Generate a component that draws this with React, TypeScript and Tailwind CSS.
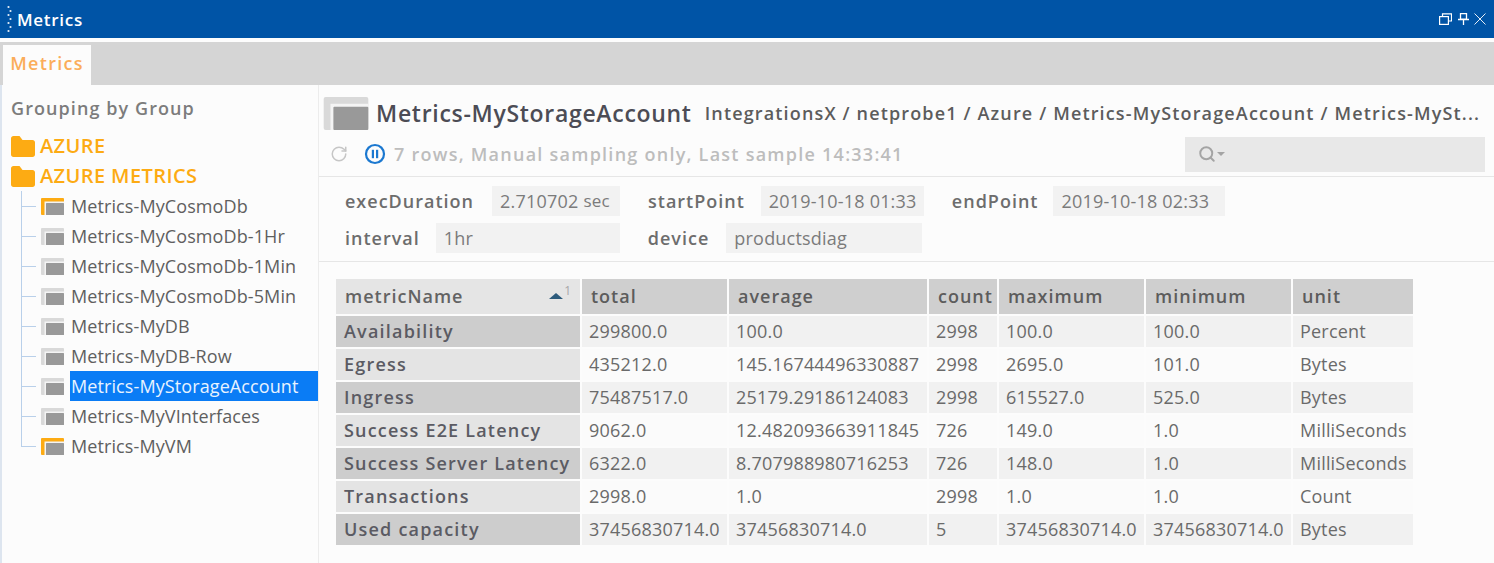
import { RotateCw, Search } from 'lucide-react';

const treeItems = [
  { name: 'Metrics-MyCosmoDb', active: true },
  { name: 'Metrics-MyCosmoDb-1Hr' },
  { name: 'Metrics-MyCosmoDb-1Min' },
  { name: 'Metrics-MyCosmoDb-5Min' },
  { name: 'Metrics-MyDB' },
  { name: 'Metrics-MyDB-Row' },
  { name: 'Metrics-MyStorageAccount', selected: true },
  { name: 'Metrics-MyVInterfaces' },
  { name: 'Metrics-MyVM', active: true },
];

const columns = ['total', 'average', 'count', 'maximum', 'minimum', 'unit'];
const colWidths = ['w-[246px]', 'w-[147px]', 'w-[200px]', 'w-[70px]', 'w-[147px]', 'w-[147px]', 'w-[122px]'];

const rows = [
  ['Availability', '299800.0', '100.0', '2998', '100.0', '100.0', 'Percent'],
  ['Egress', '435212.0', '145.16744496330887', '2998', '2695.0', '101.0', 'Bytes'],
  ['Ingress', '75487517.0', '25179.29186124083', '2998', '615527.0', '525.0', 'Bytes'],
  ['Success E2E Latency', '9062.0', '12.482093663911845', '726', '149.0', '1.0', 'MilliSeconds'],
  ['Success Server Latency', '6322.0', '8.707988980716253', '726', '148.0', '1.0', 'MilliSeconds'],
  ['Transactions', '2998.0', '1.0', '2998', '1.0', '1.0', 'Count'],
  ['Used capacity', '37456830714.0', '37456830714.0', '5', '37456830714.0', '37456830714.0', 'Bytes'],
];

const Folder = () => (
  <svg width="24" height="21" viewBox="0 0 24 21" className="shrink-0">
    <path d="M0 2.5C0 1 1 0 2.5 0H8.5l3 4h10C23 4 24 5 24 6.5v12c0 1.5-1 2.5-2.5 2.5h-19C1 21 0 20 0 18.5z" fill="#fdab13" />
  </svg>
);

const ViewIcon = ({ active, big }: { active?: boolean; big?: boolean }) => (
  <svg width={big ? 48 : 23} height={big ? 33 : 17} viewBox="0 0 23 17" className="shrink-0">
    <rect x="0" y="0" width="23" height="17" rx="1" fill={active ? '#fdab13' : '#d9d9d9'} />
    <rect x="3.5" y="3.5" width="19.5" height="13.5" fill="#f4f4f4" />
    <rect x="5" y="5" width="18" height="12" rx="0.5" fill="#999999" />
  </svg>
);

const Field = ({ label, value, width, labelGap }: { label: string; value: React.ReactNode; width: string; labelGap: string }) => (
  <div className="flex items-center">
    <span className={`font-semibold text-[#6d6d6d] tracking-[1px] ${labelGap}`}>{label}</span>
    <span className={`h-[30px] flex items-center px-2 bg-[#f2f2f2] text-[#7b7b7b] tracking-[0.2px] whitespace-nowrap ${width}`}>{value}</span>
  </div>
);

export default function App() {
  return (
    <div className="w-[1494px] h-[563px] overflow-hidden bg-[#fcfcfc] text-[16px] font-['Open_Sans',sans-serif]">
      <header className="h-[38px] bg-[#0054a6] flex items-center justify-between pl-[7px] pr-[8px] text-white">
        <div className="flex items-center gap-[5px]">
          <svg width="5" height="28" viewBox="0 0 5 28">
            {[1, 5, 9, 13, 17, 21, 25].map((y, i) => (
              <circle key={y} cx={i % 2 ? 3.5 : 1.5} cy={y + 1} r="1.1" fill="#e6eef7" />
            ))}
          </svg>
          <span className="text-[17px] font-semibold tracking-[0.7px] pt-[1px]">Metrics</span>
        </div>
        <div className="flex items-center mb-[1px]">
          <svg width="13" height="12" viewBox="0 0 13 12" fill="none" stroke="white" strokeWidth="1.2">
            <rect x="0.6" y="3.6" width="8.8" height="7.8" />
            <path d="M3.5 3.5V0.8h9v7.2H9.5" />
          </svg>
          <svg width="11" height="12" viewBox="0 0 11 12" fill="none" stroke="white" strokeWidth="1.3" className="ml-[6px]">
            <path d="M2.5 0.7h6v5.5h-6z M0 6.5h11 M5.5 6.5V12" />
          </svg>
          <svg width="12" height="12" viewBox="0 0 12 12" fill="none" stroke="white" strokeWidth="0.9" className="ml-[5px]">
            <path d="M0.5 0.5l11 11 M11.5 0.5l-11 11" />
          </svg>
        </div>
      </header>
      <div className="h-[4px] bg-[#fdfdfd]" />

      <div className="h-[43px] bg-[#d5d5d5] flex items-end pl-[3px]">
        <div className="w-[88px] h-[40px] pb-[3px] bg-[#fcfcfc] flex items-center justify-center text-[#fbad5a] text-[18px] font-semibold tracking-[1.3px]">
          Metrics
        </div>
      </div>

      <div className="flex h-[478px]">
        <aside className="w-[319px] shrink-0 border-r border-[#ececec] border-l-[2px] border-l-[#dde5ef] pl-[9px]">
          <div className="h-[46px] flex items-center text-[#7c7c7c] text-[18px] font-semibold tracking-[1.08px]">Grouping by Group</div>
          <div className="h-[30px] flex items-center gap-[5px] text-[#fdab13] text-[20px] font-semibold tracking-[0.4px]">
            <Folder />
            AZURE
          </div>
          <div className="h-[30px] flex items-center gap-[5px] text-[#fdab13] text-[20px] font-semibold tracking-[0.4px]">
            <Folder />
            AZURE METRICS
          </div>
          <ul className="text-[18px] tracking-[0.1px] text-[#5f5f5f]">
            {treeItems.map((item, i) => (
              <li key={item.name} className="relative h-[30px] flex items-center pl-[30px]">
                <span className={`absolute left-[10px] top-0 w-[1px] bg-[#b9d0ea] ${i === treeItems.length - 1 ? 'h-[15px]' : 'h-[30px]'}`} />
                <span className="absolute left-[10px] top-[15px] w-[15px] h-[1px] bg-[#b9d0ea]" />
                <ViewIcon active={item.active} />
                <span className={`ml-[6px] pl-[1px] h-[30px] flex-1 flex items-center ${item.selected ? 'bg-[#0a7cf5] text-[#e8f3ff]' : ''}`}>
                  {item.name}
                </span>
              </li>
            ))}
          </ul>
        </aside>

        <main className="flex-1 min-w-0">
          <div className="h-[92px] border-b border-[#e6e6e6] pl-[3px] pr-[8px]">
            <div className="h-[49px] flex items-center pt-[7px]">
              <ViewIcon big />
              <span className="ml-[6px] text-[23px] font-semibold text-[#4c4c55] tracking-[0.7px] whitespace-nowrap">Metrics-MyStorageAccount</span>
              <span className="ml-[13px] text-[18px] font-semibold text-[#5c5c5c] tracking-[1.15px] whitespace-nowrap">
                IntegrationsX / netprobe1 / Azure / Metrics-MyStorageAccount / Metrics-MySt...
              </span>
            </div>
            <div className="flex items-center justify-between h-[40px] pl-[8px]">
              <div className="flex items-center">
                <RotateCw size={18} strokeWidth={2} color="#c6c6c6" />
                <svg width="22" height="22" viewBox="0 0 22 22" className="ml-[16px]">
                  <circle cx="11" cy="11" r="9" fill="none" stroke="#1b78d0" strokeWidth="2.2" />
                  <rect x="7.8" y="6.8" width="2.2" height="8.4" fill="#1b78d0" />
                  <rect x="12" y="6.8" width="2.2" height="8.4" fill="#1b78d0" />
                </svg>
                <span className="ml-[8px] text-[18px] font-semibold text-[#bdbdbd] tracking-[1.25px] whitespace-nowrap">
                  7 rows, Manual sampling only, Last sample 14:33:41
                </span>
              </div>
              <div className="w-[300px] h-[35px] bg-[#e8e8e8] flex items-center pl-[13px] text-[#a4a4a4] mr-[1px]">
                <Search size={18} strokeWidth={2.6} />
                <span className="ml-[1px] w-0 h-0 border-x-[4px] border-x-transparent border-t-[4px] border-t-[#a4a4a4]" />
              </div>
            </div>
          </div>

          <div className="h-[85px] border-b border-[#e6e6e6] pl-[26px] pt-[9px] text-[18px]">
            <div className="flex items-center gap-[28px] h-[30px] mb-[7px]">
              <Field label="execDuration" labelGap="mr-[18px]" width="w-[128px]" value={<>2.710702<span className="ml-[5px] text-[17px]">sec</span></>} />
              <Field label="startPoint" labelGap="mr-[16px]" width="w-[163px]" value="2019-10-18 01:33" />
              <Field label="endPoint" labelGap="mr-[15px]" width="w-[172px]" value="2019-10-18 02:33" />
            </div>
            <div className="flex items-center gap-[28px] h-[30px]">
              <Field label="interval" labelGap="mr-[16px]" width="w-[184px]" value="1hr" />
              <Field label="device" labelGap="mr-[17px]" width="w-[196px]" value="productsdiag" />
            </div>
          </div>

          <div className="pl-[17px] pt-[17px]">
            <table className="table-fixed border-separate border-spacing-0 w-[1079px] text-[18px] tracking-[0.2px] text-[#6a6a6a]">
              <colgroup>
                {colWidths.map((w, i) => <col key={i} className={w} />)}
              </colgroup>
              <thead>
                <tr className="h-[37px]">
                  <th className="relative border-r-[2px] border-b-[2px] border-[#fcfcfc] bg-[#e5e5e5] pl-[9px] text-left font-semibold text-[#636363] tracking-[1px]">
                    metricName
                    <span className="absolute right-[17px] top-[14px] w-0 h-0 border-x-[7px] border-x-transparent border-b-[6px] border-b-[#2d5b7c]" />
                    <span className="absolute right-[8px] top-[3px] text-[12px] font-normal text-[#a8a8a8]">1</span>
                  </th>
                  {columns.map(c => (
                    <th key={c} className="border-r-[2px] border-b-[2px] border-[#fcfcfc] bg-[#cfcfcf] pl-[9px] text-left font-semibold text-[#5c5c5c] tracking-[1px]">
                      {c}
                    </th>
                  ))}
                </tr>
              </thead>
              <tbody>
                {rows.map((row, r) => (
                  <tr key={row[0]} className="h-[33px]">
                    {row.map((cell, c) => {
                      const odd = r % 2 === 0;
                      if (c === 0) {
                        return (
                          <td key={c} className={`border-r-[2px] border-b-[2px] border-[#fcfcfc] pl-[8px] pb-[1px] font-semibold text-[#5b5b63] tracking-[1.2px] whitespace-nowrap overflow-hidden ${odd ? 'bg-[#cdcdcd]' : 'bg-[#e4e4e4]'}`}>
                            {cell}
                          </td>
                        );
                      }
                      return (
                        <td key={c} className={`border-r-[2px] border-b-[2px] border-[#fcfcfc] pl-[7px] pb-[1px] whitespace-nowrap overflow-hidden ${odd ? 'bg-[#f1f1f1]' : 'bg-[#fbfbfb]'}`}>
                          {cell}
                        </td>
                      );
                    })}
                  </tr>
                ))}
              </tbody>
            </table>
          </div>
        </main>
      </div>
    </div>
  );
}
